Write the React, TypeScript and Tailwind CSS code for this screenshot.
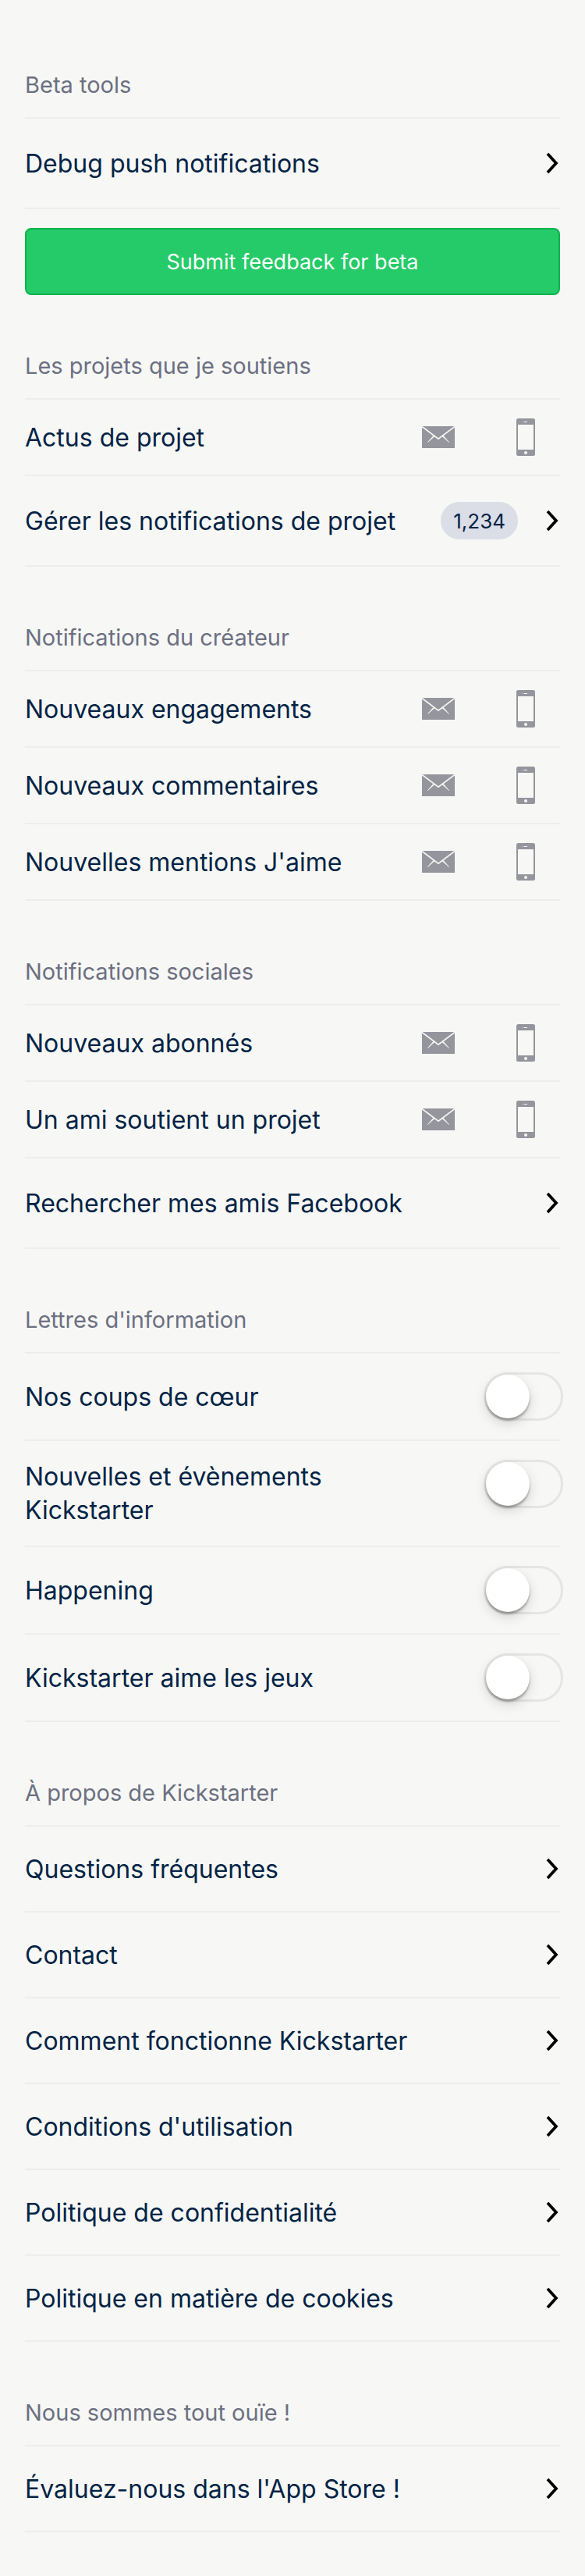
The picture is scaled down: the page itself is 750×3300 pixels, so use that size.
import { useState, type ReactNode } from "react";

function Chevron() {
  return (
    <svg className="mr-0.5 h-7 w-4 shrink-0" viewBox="0 0 16 28" fill="none" aria-hidden="true">
      <path d="M2 2 L13 14 L2 26" stroke="#000" strokeWidth="3.8" strokeLinecap="butt" />
    </svg>
  );
}

function MailIcon() {
  return (
    <svg className="h-7 w-[42px]" viewBox="0 0 42 28" fill="none" aria-hidden="true">
      <rect width="42" height="28" fill="#95959e" />
      <path d="M0 0.4 L21 16.2 L42 0.4" stroke="#f7f7f5" strokeWidth="1.6" />
      <path d="M15 11.4 L16.6 12.7 L7.4 21 L7 20.6 Z M27 11.4 L25.4 12.7 L34.6 21 L35 20.6 Z" fill="#f7f7f5" />
    </svg>
  );
}

function PhoneIcon() {
  return (
    <svg className="h-12 w-6" viewBox="0 0 24 48" aria-hidden="true">
      <rect width="24" height="48" rx="2.5" fill="#95959e" />
      <rect x="2" y="8" width="20" height="32" fill="#f7f7f5" />
      <rect x="8" y="4" width="1" height="1" fill="#f7f7f5" />
      <rect x="10" y="4" width="4" height="1" fill="#f7f7f5" />
      <circle cx="12" cy="44" r="2" fill="#f7f7f5" />
    </svg>
  );
}

function Section({ title, children }: { title: string; children: ReactNode }) {
  return (
    <section>
      <h2 className="flex h-[134px] items-end border-b-2 border-[#ededec] pb-5 text-[29px] leading-[43px] text-[#6c7082]">
        {title}
      </h2>
      <ul>{children}</ul>
    </section>
  );
}

function LinkRow({ label, badge, tall }: { label: string; badge?: string; tall?: boolean }) {
  return (
    <li className="border-b-2 border-[#ededec]">
      <a href="#" className={`flex items-center gap-9 ${tall ? "min-h-[114px]" : "min-h-[108px]"}`}>
        <span className="grow">{label}</span>
        {badge && (
          <span className="flex h-12 items-center rounded-full bg-[#dbdde7] px-4 text-[26px]">{badge}</span>
        )}
        <Chevron />
      </a>
    </li>
  );
}

function ChannelRow({ label }: { label: string }) {
  return (
    <li className="flex items-center gap-6 border-b-2 border-[#ededec]">
      <span className="grow">{label}</span>
      <button type="button" aria-label={`${label} : e-mail`} className="flex h-24 w-[88px] items-center justify-center">
        <MailIcon />
      </button>
      <button type="button" aria-label={`${label} : mobile`} className="flex h-24 w-[88px] items-center justify-center">
        <PhoneIcon />
      </button>
    </li>
  );
}

function ToggleRow({ label }: { label: string }) {
  const [on, setOn] = useState(false);
  return (
    <li className="border-b-2 border-[#ededec]">
      <label className="flex items-start py-6">
        <span className="flex min-h-[62px] grow items-center pr-20">{label}</span>
        <input
          type="checkbox"
          role="switch"
          checked={on}
          onChange={(e) => setOn(e.target.checked)}
          className="-mr-1 flex h-[62px] w-[102px] shrink-0 appearance-none items-center rounded-full border-3 border-[#e5e5e5] before:size-14 before:rounded-full before:bg-white before:shadow-[0_6px_16px_rgba(0,0,0,0.15),0_3px_3px_rgba(0,0,0,0.3)] before:content-[''] checked:justify-end checked:bg-[#25cb68]"
        />
      </label>
    </li>
  );
}

export default function App() {
  return (
    <main className="min-h-screen bg-[#f7f7f5] px-8 pt-[18px] pb-12 font-['Inter',sans-serif] text-[32px] leading-[43px] text-[#022445]">
      <Section title="Beta tools">
        <LinkRow label="Debug push notifications" tall />
      </Section>
      <button
        type="button"
        className="mt-6 flex h-[86px] w-full items-center justify-center rounded-lg border-2 border-[#0bb34b] bg-[#25cb68] text-[27px] text-white"
      >
        Submit feedback for beta
      </button>
      <Section title="Les projets que je soutiens">
        <ChannelRow label="Actus de projet" />
        <LinkRow label="Gérer les notifications de projet" badge="1,234" tall />
      </Section>
      <Section title="Notifications du créateur">
        <ChannelRow label="Nouveaux engagements" />
        <ChannelRow label="Nouveaux commentaires" />
        <ChannelRow label="Nouvelles mentions J'aime" />
      </Section>
      <Section title="Notifications sociales">
        <ChannelRow label="Nouveaux abonnés" />
        <ChannelRow label="Un ami soutient un projet" />
        <LinkRow label="Rechercher mes amis Facebook" tall />
      </Section>
      <Section title="Lettres d'information">
        <ToggleRow label="Nos coups de cœur" />
        <ToggleRow label="Nouvelles et évènements Kickstarter" />
        <ToggleRow label="Happening" />
        <ToggleRow label="Kickstarter aime les jeux" />
      </Section>
      <Section title="À propos de Kickstarter">
        <LinkRow label="Questions fréquentes" />
        <LinkRow label="Contact" />
        <LinkRow label="Comment fonctionne Kickstarter" />
        <LinkRow label="Conditions d'utilisation" />
        <LinkRow label="Politique de confidentialité" />
        <LinkRow label="Politique en matière de cookies" />
      </Section>
      <Section title="Nous sommes tout ouïe !">
        <LinkRow label="Évaluez-nous dans l'App Store !" />
      </Section>
    </main>
  );
}
